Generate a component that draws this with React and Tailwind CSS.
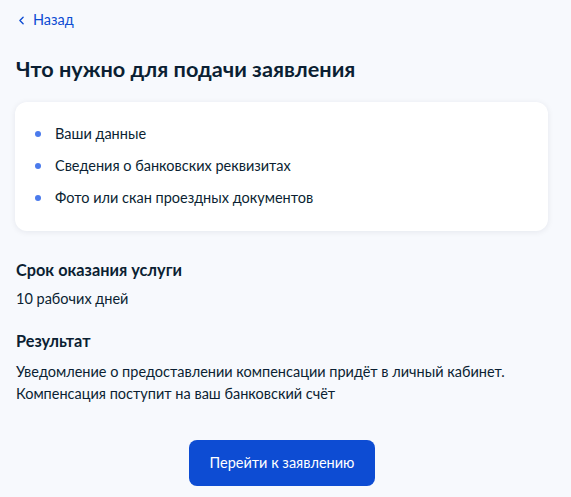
import { ChevronLeft } from 'lucide-react'

const docs = ['Ваши данные', 'Сведения о банковских реквизитах', 'Фото или скан проездных документов']

export default function App() {
  return (
    <div className="min-h-[497px] bg-[#f7f9fd] pl-[16px] pr-[23px] pt-[10px] text-[#0b1f33]" style={{ fontFamily: 'Lato, "Noto Sans", sans-serif' }}>
      <a href="#" className="flex items-center gap-[5px] text-[14.5px] text-[#0d4cd3] h-[20px]">
        <ChevronLeft size={13} strokeWidth={2.5} className="-ml-[1px]" />
        <span>Назад</span>
      </a>

      <h1 className="mt-[25px] text-[21.7px] font-bold leading-[28px]">Что нужно для подачи заявления</h1>

      <div className="mt-[19px] -ml-[1px] rounded-[12px] bg-white shadow-[0_1px_6px_rgba(11,31,51,0.08)] px-[20px] pt-[21px] pb-[22px]">
        <ul className="flex flex-col gap-[10px]">
          {docs.map(d => (
            <li key={d} className="flex items-center gap-[14px] text-[14.5px] leading-[22px]">
              <span className="w-[6px] h-[6px] rounded-full bg-[#4b7bec] shrink-0" />
              {d}
            </li>
          ))}
        </ul>
      </div>

      <h2 className="mt-[27px] text-[16.3px] font-bold leading-[24px]">Срок оказания услуги</h2>
      <p className="mt-[6px] text-[14.5px] leading-[22px]">10 рабочих дней</p>

      <h2 className="mt-[19px] text-[16.3px] font-bold leading-[24px]">Результат</h2>
      <p className="mt-[8px] text-[14.5px] leading-[22px]">
        Уведомление о предоставлении компенсации придёт в личный кабинет.
        <br />
        Компенсация поступит на ваш банковский счёт
      </p>

      <div className="flex justify-center mt-[35px] pb-[11px]">
        <button className="w-[186px] h-[46px] rounded-[8px] bg-[#0d4cd3] text-white text-[14.5px]">
          Перейти к заявлению
        </button>
      </div>
    </div>
  )
}
